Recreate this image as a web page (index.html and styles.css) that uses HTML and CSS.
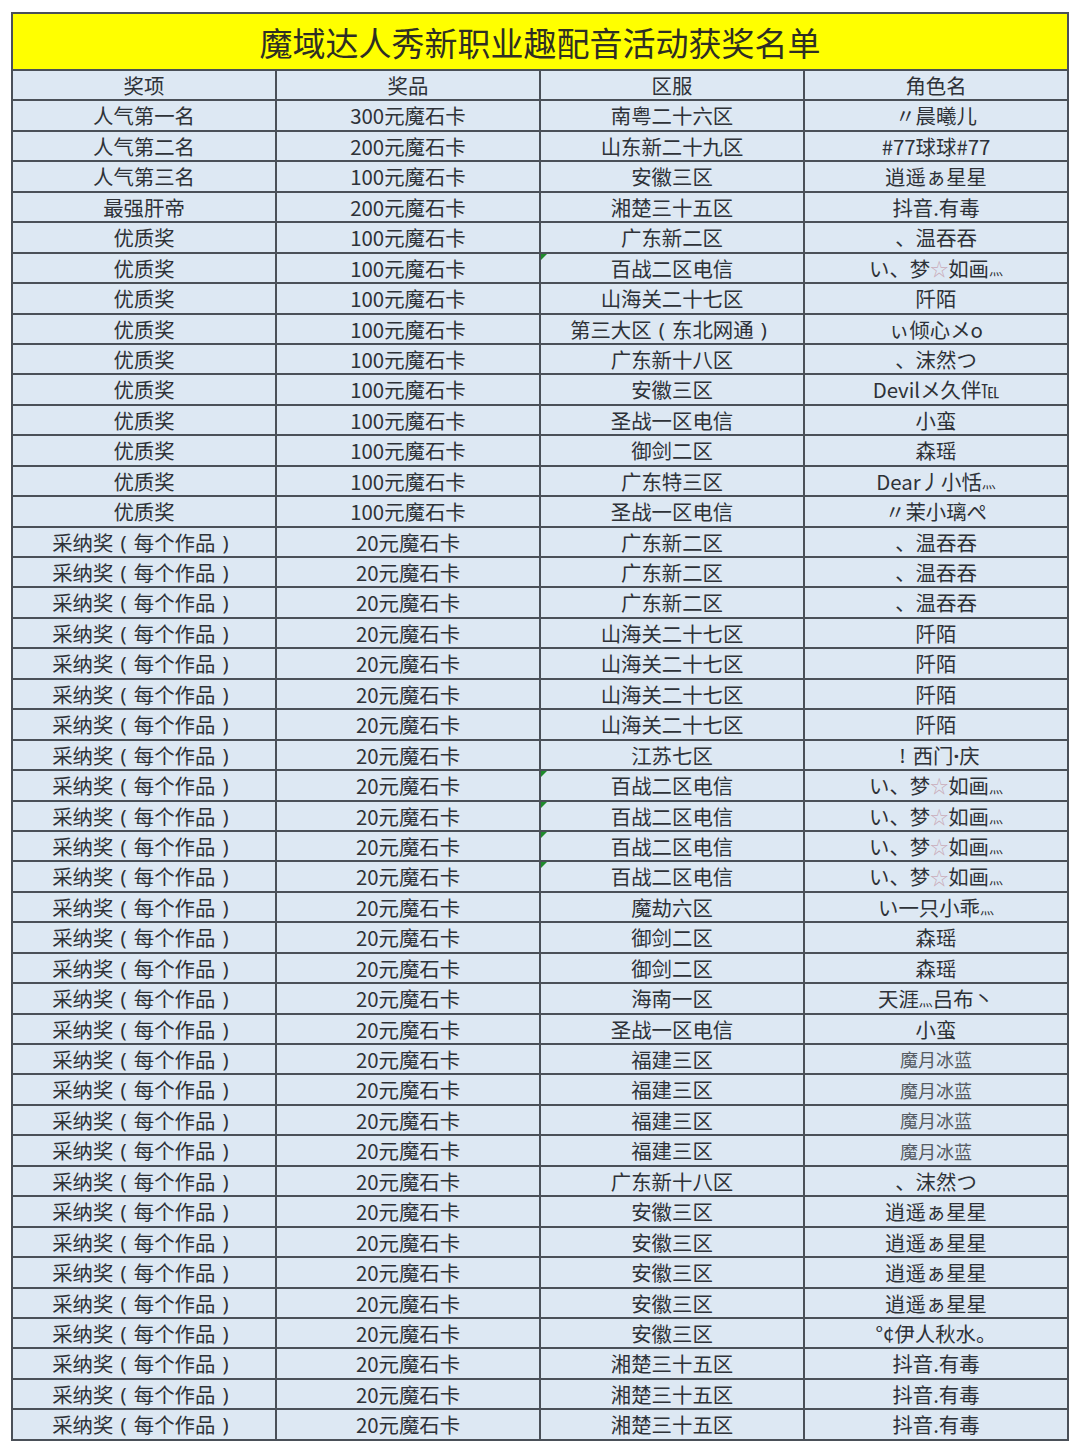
FILE: index.html
```html
<!DOCTYPE html>
<html lang="zh-CN">
<head>
<meta charset="utf-8">
<title>魔域达人秀新职业趣配音活动获奖名单</title>
<link rel="stylesheet" href="styles.css">
</head>
<body>
<div class="sheet">
  <div class="title">魔域达人秀新职业趣配音活动获奖名单</div>
  <div class="c">奖项</div><div class="c">奖品</div><div class="c">区服</div><div class="c">角色名</div>

  <div class="c">人气第一名</div><div class="c">300元魔石卡</div><div class="c">南粤二十六区</div><div class="c">〃晨曦儿</div>
  <div class="c">人气第二名</div><div class="c">200元魔石卡</div><div class="c">山东新二十九区</div><div class="c">#77球球#77</div>
  <div class="c">人气第三名</div><div class="c">100元魔石卡</div><div class="c">安徽三区</div><div class="c">逍遥ぁ星星</div>
  <div class="c">最强肝帝</div><div class="c">200元魔石卡</div><div class="c">湘楚三十五区</div><div class="c">抖音.有毒</div>
  <div class="c">优质奖</div><div class="c">100元魔石卡</div><div class="c">广东新二区</div><div class="c">、温吞吞</div>
  <div class="c">优质奖</div><div class="c">100元魔石卡</div><div class="c flag">百战二区电信</div><div class="c">い、梦<span class="star">☆</span>如画<span class="sm">灬</span></div>
  <div class="c">优质奖</div><div class="c">100元魔石卡</div><div class="c">山海关二十七区</div><div class="c">阡陌</div>
  <div class="c">优质奖</div><div class="c">100元魔石卡</div><div class="c">第三大区<span class="pr">(</span>东北网通<span class="pr">)</span></div><div class="c">ぃ倾心メo</div>
  <div class="c">优质奖</div><div class="c">100元魔石卡</div><div class="c">广东新十八区</div><div class="c">、沫然つ</div>
  <div class="c">优质奖</div><div class="c">100元魔石卡</div><div class="c">安徽三区</div><div class="c">Devilメ久伴<span class="tel">℡</span></div>
  <div class="c">优质奖</div><div class="c">100元魔石卡</div><div class="c">圣战一区电信</div><div class="c">小蛮</div>
  <div class="c">优质奖</div><div class="c">100元魔石卡</div><div class="c">御剑二区</div><div class="c">森瑶</div>
  <div class="c">优质奖</div><div class="c">100元魔石卡</div><div class="c">广东特三区</div><div class="c">Dear丿小恬<span class="sm">灬</span></div>
  <div class="c">优质奖</div><div class="c">100元魔石卡</div><div class="c">圣战一区电信</div><div class="c">〃茉小璃ぺ</div>

  <div class="c">采纳奖<span class="pr">(</span>每个作品<span class="pr">)</span></div><div class="c">20元魔石卡</div><div class="c">广东新二区</div><div class="c">、温吞吞</div>
  <div class="c">采纳奖<span class="pr">(</span>每个作品<span class="pr">)</span></div><div class="c">20元魔石卡</div><div class="c">广东新二区</div><div class="c">、温吞吞</div>
  <div class="c">采纳奖<span class="pr">(</span>每个作品<span class="pr">)</span></div><div class="c">20元魔石卡</div><div class="c">广东新二区</div><div class="c">、温吞吞</div>
  <div class="c">采纳奖<span class="pr">(</span>每个作品<span class="pr">)</span></div><div class="c">20元魔石卡</div><div class="c">山海关二十七区</div><div class="c">阡陌</div>
  <div class="c">采纳奖<span class="pr">(</span>每个作品<span class="pr">)</span></div><div class="c">20元魔石卡</div><div class="c">山海关二十七区</div><div class="c">阡陌</div>
  <div class="c">采纳奖<span class="pr">(</span>每个作品<span class="pr">)</span></div><div class="c">20元魔石卡</div><div class="c">山海关二十七区</div><div class="c">阡陌</div>
  <div class="c">采纳奖<span class="pr">(</span>每个作品<span class="pr">)</span></div><div class="c">20元魔石卡</div><div class="c">山海关二十七区</div><div class="c">阡陌</div>
  <div class="c">采纳奖<span class="pr">(</span>每个作品<span class="pr">)</span></div><div class="c">20元魔石卡</div><div class="c">江苏七区</div><div class="c"><span class="pr">!</span>西门<span class="lat">·</span>庆</div>
  <div class="c">采纳奖<span class="pr">(</span>每个作品<span class="pr">)</span></div><div class="c">20元魔石卡</div><div class="c flag">百战二区电信</div><div class="c">い、梦<span class="star">☆</span>如画<span class="sm">灬</span></div>
  <div class="c">采纳奖<span class="pr">(</span>每个作品<span class="pr">)</span></div><div class="c">20元魔石卡</div><div class="c flag">百战二区电信</div><div class="c">い、梦<span class="star">☆</span>如画<span class="sm">灬</span></div>
  <div class="c">采纳奖<span class="pr">(</span>每个作品<span class="pr">)</span></div><div class="c">20元魔石卡</div><div class="c flag">百战二区电信</div><div class="c">い、梦<span class="star">☆</span>如画<span class="sm">灬</span></div>
  <div class="c">采纳奖<span class="pr">(</span>每个作品<span class="pr">)</span></div><div class="c">20元魔石卡</div><div class="c flag">百战二区电信</div><div class="c">い、梦<span class="star">☆</span>如画<span class="sm">灬</span></div>
  <div class="c">采纳奖<span class="pr">(</span>每个作品<span class="pr">)</span></div><div class="c">20元魔石卡</div><div class="c">魔劫六区</div><div class="c">い一只小乖<span class="sm">灬</span></div>
  <div class="c">采纳奖<span class="pr">(</span>每个作品<span class="pr">)</span></div><div class="c">20元魔石卡</div><div class="c">御剑二区</div><div class="c">森瑶</div>
  <div class="c">采纳奖<span class="pr">(</span>每个作品<span class="pr">)</span></div><div class="c">20元魔石卡</div><div class="c">御剑二区</div><div class="c">森瑶</div>
  <div class="c">采纳奖<span class="pr">(</span>每个作品<span class="pr">)</span></div><div class="c">20元魔石卡</div><div class="c">海南一区</div><div class="c">天涯<span class="sm">灬</span>吕布丶</div>
  <div class="c">采纳奖<span class="pr">(</span>每个作品<span class="pr">)</span></div><div class="c">20元魔石卡</div><div class="c">圣战一区电信</div><div class="c">小蛮</div>
  <div class="c">采纳奖<span class="pr">(</span>每个作品<span class="pr">)</span></div><div class="c">20元魔石卡</div><div class="c">福建三区</div><div class="c light">魔月冰蓝</div>
  <div class="c">采纳奖<span class="pr">(</span>每个作品<span class="pr">)</span></div><div class="c">20元魔石卡</div><div class="c">福建三区</div><div class="c light">魔月冰蓝</div>
  <div class="c">采纳奖<span class="pr">(</span>每个作品<span class="pr">)</span></div><div class="c">20元魔石卡</div><div class="c">福建三区</div><div class="c light">魔月冰蓝</div>
  <div class="c">采纳奖<span class="pr">(</span>每个作品<span class="pr">)</span></div><div class="c">20元魔石卡</div><div class="c">福建三区</div><div class="c light">魔月冰蓝</div>
  <div class="c">采纳奖<span class="pr">(</span>每个作品<span class="pr">)</span></div><div class="c">20元魔石卡</div><div class="c">广东新十八区</div><div class="c">、沫然つ</div>
  <div class="c">采纳奖<span class="pr">(</span>每个作品<span class="pr">)</span></div><div class="c">20元魔石卡</div><div class="c">安徽三区</div><div class="c">逍遥ぁ星星</div>
  <div class="c">采纳奖<span class="pr">(</span>每个作品<span class="pr">)</span></div><div class="c">20元魔石卡</div><div class="c">安徽三区</div><div class="c">逍遥ぁ星星</div>
  <div class="c">采纳奖<span class="pr">(</span>每个作品<span class="pr">)</span></div><div class="c">20元魔石卡</div><div class="c">安徽三区</div><div class="c">逍遥ぁ星星</div>
  <div class="c">采纳奖<span class="pr">(</span>每个作品<span class="pr">)</span></div><div class="c">20元魔石卡</div><div class="c">安徽三区</div><div class="c">逍遥ぁ星星</div>
  <div class="c">采纳奖<span class="pr">(</span>每个作品<span class="pr">)</span></div><div class="c">20元魔石卡</div><div class="c">安徽三区</div><div class="c">°¢伊人秋水。</div>
  <div class="c">采纳奖<span class="pr">(</span>每个作品<span class="pr">)</span></div><div class="c">20元魔石卡</div><div class="c">湘楚三十五区</div><div class="c">抖音.有毒</div>
  <div class="c">采纳奖<span class="pr">(</span>每个作品<span class="pr">)</span></div><div class="c">20元魔石卡</div><div class="c">湘楚三十五区</div><div class="c">抖音.有毒</div>
  <div class="c">采纳奖<span class="pr">(</span>每个作品<span class="pr">)</span></div><div class="c">20元魔石卡</div><div class="c">湘楚三十五区</div><div class="c">抖音.有毒</div>
</div>
</body>
</html>
```

FILE: styles.css
```css
html, body {
  margin: 0;
  padding: 0;
  background: #ffffff;
}
body {
  font-family: "Noto Sans CJK SC", "Noto Sans", sans-serif;
  color: #2e3238;
  overflow: hidden;
}
.sheet {
  margin: 12px 0 0 11px;
  width: 1058px;
  box-sizing: border-box;
  padding: 2px;
  background: #4a5058;
  display: grid;
  grid-template-columns: repeat(4, 1fr);
  grid-template-rows: 55px;
  grid-auto-rows: 28.44px;
  gap: 2px;
}
.title {
  grid-column: 1 / 5;
  background: #ffff00;
  display: flex;
  align-items: center;
  justify-content: center;
  font-size: 33px;
  line-height: 1;
  color: #2e2e24;
  padding-top: 2px;
  box-sizing: border-box;
}
.c {
  background: #dde8f3;
  display: flex;
  align-items: center;
  justify-content: center;
  font-size: 20.4px;
  line-height: 1;
  white-space: nowrap;
  position: relative;
}
.flag::before {
  content: "";
  position: absolute;
  left: 0;
  top: 0;
  border-top: 6px solid #1f8a2c;
  border-right: 6px solid transparent;
}
.pr {
  display: inline-block;
  width: 1em;
  text-align: center;
  font-family: "Noto Sans", "DejaVu Sans", sans-serif;
}
.lat {
  font-family: "Noto Sans", "DejaVu Sans", sans-serif;
  font-weight: bold;
}
.star {
  color: #c9aab8;
  font-size: 18px;
}
.sm {
  font-size: 14px;
  align-self: flex-end;
  padding-bottom: 6px;
}
.tel {
  font-size: 18px;
}
.light {
  color: #565c64;
  font-size: 18px;
}
```
